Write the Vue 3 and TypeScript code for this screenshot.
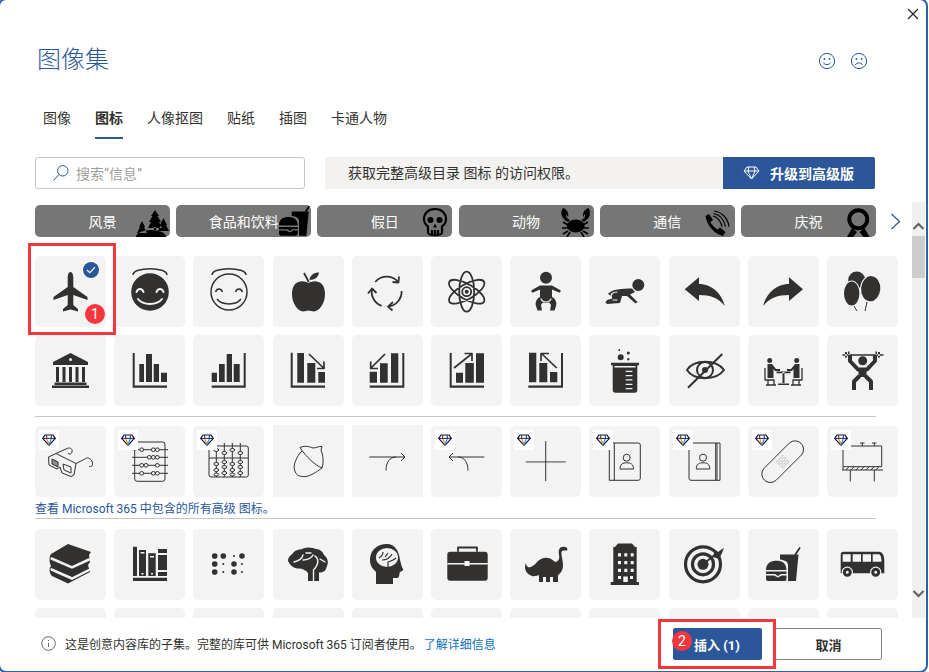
<script setup lang="ts">
interface Shape {
  f?: string
  g?: string
  c?: string
  cs?: string
  l?: string
  f2?: string
  o?: string
  w?: number
  cw?: number
  ow?: number
}

const c = (x: number, y: number, r: number): string =>
  `M${x - r} ${y}a${r} ${r} 0 1 0 ${2 * r} 0a${r} ${r} 0 1 0 ${-2 * r} 0z`
const r = (x: number, y: number, w: number, h: number): string => `M${x} ${y}h${w}v${h}h${-w}z`
const e = (x: number, y: number, rx: number, ry: number, deg = 0): string => {
  const dx = rx * Math.cos((deg * Math.PI) / 180)
  const dy = rx * Math.sin((deg * Math.PI) / 180)
  return `M${x - dx} ${y - dy}A${rx} ${ry} ${deg} 1 0 ${x + dx} ${y + dy}A${rx} ${ry} ${deg} 1 0 ${x - dx} ${y - dy}z`
}
const beads = (list: number[][], rx: number, ry: number): string =>
  list.map(([x, y]) => e(x, y, rx, ry)).join('')

const burger: Shape = {
  f: 'M32 25.5H50.5L48 52H40V36C40 33 37 31 32 30.5zM18 41C18 34 23 31.7 28.5 31.7C34 31.7 38.5 34 38.5 41zM18 42.5H38.5V45H33L30 47L27 45H18zM18 46.5H26L30 48.5L33.5 46.5H38.5V50A2 2 0 0 1 36.5 52H20A2 2 0 0 1 18 50z',
  l: 'M47 26L52 18.5',
  w: 1.8,
}

const halo = 'M19 19C19 10.5 53 10.5 53 19'
const abacusA = [[27.7, 23.7], [39.3, 23.7], [43.3, 23.7], [35.3, 31.3], [39.3, 31.3], [43.3, 31.3], [27.7, 39.3], [32, 39.3], [43.3, 39.3], [27.7, 47.3], [39.3, 47.3], [43.3, 47.3]]
const abacusB = [[23.3, 24], [31.3, 27], [39.3, 24], [47.3, 27], [23.3, 38], [23.3, 44], [31.3, 36], [31.3, 41], [39.3, 38], [39.3, 44], [47.3, 36], [47.3, 41], [31.3, 47], [23.3, 48.5], [39.3, 48.5], [47.3, 47]]
const padDots: string = [-2, -1, 0, 1, 2]
  .flatMap((i) => [-2, -1, 0, 1, 2].map((j) => c(34.7 + (i - j) * 1.5, 35.7 + (i + j) * 1.5, 0.55)))
  .join('')

const row1: Shape[] = [
  { f: 'M35.5 16C33.5 16 32.7 19 32.7 22V31L18.5 41V44L32.7 39V49L28 53V55.5L35.5 53.5L43 55.5V53L38.3 49V39L52.5 44V41L38.3 31V22C38.3 19 37.5 16 35.5 16z' },
  { f: c(36, 36, 18.8), cs: 'M22.5 36C24 32 28 32 29.5 36M42.5 36C44 32 48 32 49.5 36M24 43C29 49.5 43 49.5 48 43', cw: 2, l: halo, w: 1.5 },
  { l: `${c(36, 36, 18)}${halo}M22.5 36C24 32 28 32 29.5 36M42.5 36C44 32 48 32 49.5 36M24 43C29 49.5 43 49.5 48 43`, w: 1.5 },
  { f: 'M35.5 27C30 23.5 19 24 19 38C19 48 25 55 30 55.5C32.5 55.5 33.5 54.5 35.5 54.5C37.5 54.5 38.5 55.5 41 55.5C46 55 52 48 52 38C52 24 41 23.5 35.5 27zM36.5 24C37 19 41 16.5 46 16.5C45.5 21 42 24 36.5 24z', l: 'M35.8 26L31 17', w: 1.8 },
  { l: 'M23.2 26A15 15 0 0 1 46.2 26M47 20.5L46.5 26.5L40.5 26M49.6 35A15 15 0 0 1 36 50.6M41 46L36 50.6L40.5 54.5M29.6 49.8A15 15 0 0 1 19.9 33.1M16 37.5L20 32.5L24.5 37', w: 1.8 },
  { f: c(35.7, 35.7, 2), l: `${e(35.7, 35.7, 20, 7.5, 30)}${e(35.7, 35.7, 20, 7.5, 90)}${e(35.7, 35.7, 20, 7.5, 150)}${c(35.7, 35.7, 4.5)}`, w: 1.8 },
  { f: `${c(36, 21.7, 6)}M30 29.5H42L50 34C51.5 35 50.5 37 49 36.5L42 33.5V41C46 43 47 47 46 50L44.5 54.5H40L41 49C40 47 39 45.5 36 47C33 45.5 32 47 31 49L32 54.5H27.5L26 50C25 47 26 43 30 41V33.5L23 36.5C21.5 37 20.5 35 22 34z`, cs: 'M31 43C33 47 39 47 41 43', cw: 1.2 },
  { f: `${c(49.3, 29, 6)}M19 38C23 33 33 32.5 43 32.5L46 36L41 38.5L48.5 46L46.5 47.5L38 40H33L31 47L18 48L16.5 46.5C18 43 21 43 23 43L22 40z`, cs: 'M22.5 42C21 38 24 36 28 36M24 44H28', cw: 1.2 },
  { f: 'M15.7 33.3L30 21.3V28C43 28 53 38 55.7 50C50 42 41 39 30 39V45z' },
  { f: 'M55 33.3L41 21.3V28C28 28 18 38 15.3 50C21 42 30 39 41 39V45z' },
  { f: e(29.7, 24, 8.5, 8.5), c: `${e(24.7, 37.5, 8.7, 13)}${e(43.7, 32.7, 10.7, 13.7, 5)}`, f2: `${e(24.7, 37.5, 7.7, 12)}${e(43.7, 32.7, 9.6, 12.6, 5)}`, l: 'M27 50L30 55M40 46L38 55', w: 1 },
]

const row2: Shape[] = [
  { f: `M35.5 18L18 27V30H53V27z${[21, 27.5, 34, 40.5, 47].map((x) => r(x, 32, 3, 15)).join('')}${r(19.5, 47.5, 32, 2.5)}${r(17, 50.5, 37, 2.5)}`, c: c(35.5, 24.5, 1.5) },
  { f: `${r(18.7, 18, 2, 32.5)}${r(18.7, 50.5, 34.3, 2.2)}${r(25.3, 29, 4.7, 18)}${r(32, 19, 6, 28)}${r(39.7, 29, 5.3, 18)}${r(47, 37.7, 6, 9.3)}` },
  { f: `${r(50.7, 18, 2, 32.5)}${r(18.7, 50.5, 34, 2.2)}${r(18.7, 37.7, 5.3, 9.3)}${r(26, 29, 5.7, 18)}${r(33.7, 19, 5.3, 28)}${r(40.7, 29, 6, 18)}` },
  { f: `${r(17.7, 17.7, 2, 32.8)}${r(17.7, 50.5, 34.3, 2.2)}${r(24.3, 18, 6.7, 29.7)}${r(34.3, 28, 8, 19.7)}${r(45.3, 37, 6.7, 10.7)}`, l: 'M36 19L50.5 33M51 26.5V33.5H44', w: 1.7 },
  { f: `${r(50.3, 18, 2, 32.5)}${r(17.7, 50.5, 34.6, 2.2)}${r(17.7, 36.7, 7.3, 11)}${r(28, 28.3, 7.7, 19.4)}${r(39, 18.3, 7.3, 29.4)}`, l: 'M33 19L19 33M18.7 26.5V33.5H26', w: 1.7 },
  { f: `${r(18.7, 18, 2, 32.5)}${r(18.7, 50.5, 34.3, 2.2)}${r(25, 37.7, 7, 10)}${r(34.3, 28, 8.5, 19.7)}${r(45, 18.3, 8, 29.4)}`, l: 'M23 33L40.5 19M33.5 18.5H41V26', w: 1.7 },
  { f: `${r(19, 17.7, 7.3, 29.6)}${r(29.3, 28, 8, 19.3)}${r(40, 37, 7.3, 10.3)}${r(51, 18, 2, 32.5)}${r(18.3, 50.5, 34.7, 2.2)}`, l: 'M46.7 33L32 19M31 26V18.5H39', w: 1.7 },
  { f: `${c(31.7, 22.3, 3)}${c(39.3, 18, 1.5)}${c(30.3, 15, 1)}${c(39.3, 24.3, 1.2)}${r(22, 27.7, 28, 2.6)}M23.7 30.3H48.3V55A2.7 2.7 0 0 1 45.6 57.7H26.4A2.7 2.7 0 0 1 23.7 55z`, c: `${r(25.5, 31, 21, 1.4)}${r(36.7, 35.7, 6.7, 1.2)}${r(36.7, 40, 6.7, 1.2)}${r(36.7, 44.3, 6.7, 1.2)}${r(36.7, 48.7, 6.7, 1.2)}${r(36.7, 53, 6.7, 1.2)}` },
  { f: c(36, 35, 3), l: `M18 35C25 24 47 24 55 35C47 46 25 46 18 35z${c(36, 35, 8)}M53.3 19L19 52.7`, w: 2 },
  { f: `${c(21.7, 25.5, 2.5)}${c(48.7, 25.5, 2.5)}M19.5 29H24L28 34H32V36H27L25.5 34V43H19.5zM51.5 29H47L43 34H39V36H44L45.5 34V43H51.5z${r(28.5, 36.5, 14, 1.7)}${r(34.5, 37, 2, 12)}${r(30, 48.5, 11, 1.5)}`, l: 'M17 33V45H26V50M20 45V50M18 50H28M54 33V45H45V50M51 45V50M53 50H43', w: 1.3 },
  {
    f: `${c(35.7, 25.7, 4.5)}${r(15.5, 19.3, 41, 1.5)}${r(18, 17, 2, 5.5)}${r(51, 17, 2, 5.5)}${r(21, 16.5, 1.5, 6.5)}${r(48.5, 16.5, 1.5, 6.5)}${r(31.5, 33, 8, 9)}`,
    l: 'M23 20V26L31 34.5H40L48 26V20M32.5 41L27 46.5V55M38.5 41L44 46.5V55',
    w: 4,
  },
]

const row3: Shape[] = [
  { g: 'M17 33l6 3v5l-6-3z', l: 'M13.5 31L21 27.5L41 37.5L39 49L36 50.5L27 47L25 41L22 43L14 39zM17 33l6 3v5l-6-3zM28 38l8 3v6l-7-3zM41 37.5L50 33C52 31 55 32 57 35C59 39 56 42 54 40M21 27.5L31 23C34 21 38 22 37 26C36 29 33 28 33 27', w: 1 },
  { l: 'M23.2 16H48.5A2.5 2.5 0 0 1 51 18.5V52.8A2.5 2.5 0 0 1 48.5 55.3H23.2A2.5 2.5 0 0 1 20.7 52.8V18.5A2.5 2.5 0 0 1 23.2 16zM18 23.7H54M18 31.3H54M18 39.3H54M18 47.3H54', w: 1, c: beads(abacusA, 2, 1.8), o: beads(abacusA, 2, 1.8), ow: 1 },
  { l: 'M18 20H53.3A2 2 0 0 1 55.3 22V49A2 2 0 0 1 53.3 51H18A2 2 0 0 1 16 49V22A2 2 0 0 1 18 20zM16 32H55.3M23.3 17V51M31.3 17V51M39.3 17V51M47.3 17V51', w: 1, c: beads(abacusB, 2.4, 1.5), o: beads(abacusB, 2.4, 1.5), ow: 1 },
  { l: 'M29 25C24 30 20 38 21.5 44C23 50 28 51 33 50.5C40 49 46 44 49 42M27 21.5C33 19 37 21 40 22C43 22 46 20 49 20.5L48 24C50 29 51 36 49 42C42 39 33 31 27 21.5z', w: 1 },
  { l: 'M17.3 31H53M49 27L53 31L49 35M34 44.5C34 36 38 31 44 31', w: 1 },
  { l: 'M53.3 31H18M22 27L18 31L22 35M37 44.5C37 36 33 31 27 31', w: 1 },
  { g: r(15.7, 35, 40, 1.7), l: 'M35.7 15V55', w: 1 },
  { l: `M20.3 17H49.3A2 2 0 0 1 51.3 19V52.3A2 2 0 0 1 49.3 54.3H20.3zM25.3 17V54.3${c(37.7, 31.7, 3.5)}M31 43C31 38 34 36.8 37.7 36.8C41.5 36.8 44.5 38 44.5 43z`, w: 1 },
  { l: `M22 17H51V54.3H22A2 2 0 0 1 20 52.3V19A2 2 0 0 1 22 17zM46.7 17V54.3M48 17V54.3${c(34, 31.7, 3.5)}M27.3 43C27.3 38 30.3 36.8 34 36.8C37.8 36.8 40.8 38 40.8 43z`, w: 1 },
  { g: padDots, l: 'M16 42.4L41.4 17A8.5 8.5 0 0 1 53.4 29L28 54.4A8.5 8.5 0 0 1 16 42.4z', w: 1 },
  { l: `${r(16, 20, 38.7, 20.7)}M15 44H56M16 40.7V44M23.3 44V55.3M47.3 44V55.3M35.3 17V20M47.3 17V20M33 17H37.5M45 17H49.5M19 44L22 40.7M24 44L27 40.7M29 44L32 40.7M34 44L37 40.7M39 44L42 40.7M44 44L47 40.7M49 44L52 40.7`, w: 1 },
]

const row4: Shape[] = [
  { f: 'M16 25L33 15L56 23L54 26L55 33L53 36L55 43L33 54.5L17 47C14 44 14 39 16 37C14 33 14 28 16 25z', cs: 'M16.5 29.5L37 38.5L54 30.5M16.5 40.5L37 49.5L54 41', cw: 2.5 },
  { f: `${r(19, 48.7, 34, 3.3)}${r(19, 17.7, 4, 29.3)}${r(25, 21, 7, 26)}${r(34.3, 24.3, 7.4, 22.7)}${r(44, 20, 9, 4)}${r(44, 26, 9, 15)}${r(44, 43, 9, 4)}`, c: `${r(26.5, 23, 4, 1.5)}${r(36, 27, 4, 1.5)}${r(27.5, 44, 2, 1.5)}${r(37, 44, 2, 1.5)}` },
  { f: `${c(21.7, 27, 2.8)}${c(30.3, 27, 2.8)}${c(41, 27, 1)}${c(49, 27, 2.8)}${c(21.7, 35, 2.8)}${c(30.3, 35, 1)}${c(41, 35, 2.8)}${c(49, 35, 1)}${c(21.7, 43, 2.8)}${c(30.3, 43, 1)}${c(41, 43, 2.8)}${c(49, 43, 1)}` },
  { f: 'M15 32C15 27 19 26 20 24C23 20 28 21 30 19.5C35 17.5 40 18.5 43 20C47 20 50 23 51 26C55 29 56 34 53.5 38C53 42 50 43.5 47 43.5H46V52H35V44C33 41 29 39.5 26 39.5C22 39.5 18 38 15 32z', cs: 'M21 33C25 32 29 30 30 26M30 31C34 31 39 29 40 26M42 27C46 30 46 35 40.5 41M40.5 52V41M47 30L52 33M33 24L38 24', cw: 1.4 },
  { f: 'M35 15C24 15 18 22 18 31C18 37 21 40 24 43V55H41V49H45C48 49 47 44 48 43C50 42 52 41 51 40C49 37 49 34 48 31C47 22 43 15 35 15z', c: e(35, 28.5, 11, 9.5), l: 'M27 29C30 27 31 25 31 23M30 31C34 31 38 29 40 25M36 38V33C39 32 42 31 44 29M33 28L36 24', w: 1.2 },
  { f: 'M19.3 22.7H53.7A3 3 0 0 1 56.7 25.7V48.7A3 3 0 0 1 53.7 51.7H19.3A3 3 0 0 1 16.3 48.7V25.7A3 3 0 0 1 19.3 22.7z', c: `${r(16.3, 34, 40.4, 1.4)}${r(33.5, 32, 5, 5)}`, l: 'M27 22.7V18.5H46V22.7', w: 1.8 },
  { f: 'M15.5 34C14 40 16 45 22 47C24 47.5 27 47 29 46V53H33V48H36V53H40V48H43V53H48V46C51 44 53 41 53 36C53 31 51 26 51.5 23C52 21 55 21.5 57 21.5C58 20 57 18 55 18C50 17 48 20 49 26C50 30 48 33 45 33C40 28 33 27 27 33C24 37 20 39 18 38C16 37 16 35 15.5 34z' },
  { f: 'M26 18L29 14.5H43L46 18H47.7V53H50V56H21.7V53H24.3V18z', c: `${[29, 35.3, 41.7].flatMap((x) => [24.3, 32, 39.7].map((y) => r(x, y, 3, 3.2))).join('')}${r(34.3, 47.5, 4.5, 5.5)}${r(29, 47, 3, 3)}${r(41, 47, 3, 3)}` },
  { f: c(34, 35.3, 5.5), l: `${c(34, 35.3, 17.5)}${c(34, 35.3, 10.5)}`, w: 3.2, f2: 'M44 28L46 21L49 23L55 18.7L53 24L50 30z', o: 'M34 35.3L47 25', ow: 1.8 },
  burger,
  { f: 'M16.7 22.7H52C55 22.7 57.3 26 57.3 31V44.3H13.7V25.7A3 3 0 0 1 16.7 22.7z', c: `${r(15.7, 25.3, 8, 7.4)}${r(25.7, 25.3, 8.3, 7.4)}${r(35.7, 25.3, 8.3, 7.4)}M45.7 25.3H52C53.5 25.3 54.5 29 54.5 32.7H45.7z${c(20.3, 43.3, 5.7)}${c(48.7, 43.3, 5.7)}`, f2: `${c(20.3, 43.3, 4.5)}${c(20.3, 43.3, 1.5)}${c(48.7, 43.3, 4.5)}${c(48.7, 43.3, 1.5)}` },
]

const blanks: Shape[] = Array.from({ length: 11 }, () => ({}))

const mirrorX = (v: number): number => 35.4 - v
const claw = (m: boolean): string => {
  const x = (v: number) => (m ? mirrorX(v) : v)
  return `M${x(5)} 3C${x(2)} 7 ${x(3)} 14 ${x(10)} 17L${x(12)} 15C${x(8)} 13 ${x(8)} 11 ${x(8.5)} 9L${x(10)} 12C${x(11)} 9 ${x(10)} 5 ${x(5)} 3z`
}

const chips = [
  { label: '风景', w: 36, h: 32, vb: '0 0 36 32', shape: { f: `M21 5L25 11H23.5L27 17H25L28 23H14L17 17H15L18.5 11H17zM29.5 13L33 20H32L35 26H24L27 20H26zM8 16L11 22H10L13 28H3L6 22H5z${e(17, 32, 15, 7)}${r(20, 22, 2, 3)}` } as Shape },
  { label: '食品和饮料', w: 33, h: 32, vb: '17 18.5 36 35', shape: burger },
  { label: '假日', w: 36, h: 32, vb: '0 0 36 32', shape: { f: `${c(14.5, 15, 3)}${c(23.5, 15, 3)}M19 18.5L17 22.5H21z`, l: 'M19 4C12 4 8 8.5 8 14C8 18 10 20 12 21.5V28C14 31 24 31 26 28V21.5C28 20 30 18 30 14C30 8.5 26 4 19 4zM16 25V30M19 25V30M22 25V30', w: 2.2 } as Shape },
  { label: '动物', w: 36, h: 32, vb: '0 0 36 32', shape: { f: `${claw(false)}${claw(true)}${e(17.7, 21, 9, 6.5)}`, l: 'M10 20L5 17M10 23L4 23M10 26L5 29M12 27L9 32M25 20L30 17M25 23L31 23M25 26L30 29M23 27L26 32', w: 1.6 } as Shape },
  { label: '通信', w: 36, h: 32, vb: '0 0 36 32', shape: { f: 'M6.5 11L10 9L14 15L11.5 17C13 20 15.5 23 18.5 24.5L21 22.5L26.5 27L24 31C16 29 8 21 6.5 11z', l: 'M14 11C18 12 22 16 23 21.7M14.5 8.5C20 9.5 25 14 26.5 21.7M15 6C22 6.5 29 13 30 21.7', w: 1.2 } as Shape },
  { label: '庆祝', w: 36, h: 32, vb: '0 0 36 32', shape: { f: 'M12 23L7 32H13L17 27zM24.5 23L29.5 32H23.5L19.5 27z', l: c(18.3, 14.3, 9), w: 4 } as Shape },
]

const sections = [
  { rows: [...row1, ...row2], premium: false },
  { rows: row3, premium: true },
  { rows: [...row4, ...blanks], premium: false },
]

const tabs = ['图像', '图标', '人像抠图', '贴纸', '插图', '卡通人物']
const free = new Set([3, 4])
</script>

<template>
  <div class="app">
    <div class="topbar">
      <svg class="close" width="12" height="12" viewBox="0 0 12 12"><path d="M1 1L11 11M11 1L1 11" /></svg>
    </div>

    <header class="title-row">
      <h1 class="title">图像集</h1>
      <div class="feedback">
        <svg width="18" height="18" viewBox="0 0 18 18">
          <circle cx="9" cy="9" r="7.6" />
          <circle class="dot" cx="6.4" cy="7" r=".9" />
          <circle class="dot" cx="11.6" cy="7" r=".9" />
          <path d="M5.3 10.5C6.5 13.3 11.5 13.3 12.7 10.5" />
        </svg>
        <svg width="18" height="18" viewBox="0 0 18 18">
          <circle cx="9" cy="9" r="7.6" />
          <circle class="dot" cx="6.4" cy="7" r=".9" />
          <circle class="dot" cx="11.6" cy="7" r=".9" />
          <path d="M5.3 13C6.5 10.2 11.5 10.2 12.7 13" />
        </svg>
      </div>
    </header>

    <nav class="tabs">
      <span v-for="(tab, i) in tabs" :key="tab" class="tab" :class="{ active: i === 1 }">{{ tab }}</span>
    </nav>

    <div class="toolbar">
      <div class="search">
        <svg width="18" height="18" viewBox="0 0 18 18"><circle cx="10.8" cy="6.8" r="5.2" /><path d="M7 10.6L1.5 16.5" /></svg>
        <span>搜索“信息”</span>
      </div>
      <div class="banner">获取完整高级目录 图标 的访问权限。</div>
      <button class="upgrade">
        <svg width="17" height="14" viewBox="0 0 17 14"><path d="M4 1H13L16 5L8.5 13L1 5zM1 5H16M6 1L5 5L8.5 13L12 5L11 1" /></svg>
        升级到高级版
      </button>
    </div>

    <div class="body">
      <main class="content">
        <div class="chips">
          <div v-for="chip in chips" :key="chip.label" class="chip">
            <span>{{ chip.label }}</span>
            <svg class="chip-icon" :width="chip.w" :height="chip.h" :viewBox="chip.vb">
              <path v-if="chip.shape.f" class="ink" :d="chip.shape.f" />
              <path v-if="chip.shape.l" class="line" :d="chip.shape.l" :stroke-width="chip.shape.w ?? 1" />
            </svg>
          </div>
          <svg class="next" width="11" height="17" viewBox="0 0 11 17"><path d="M1.5 1L9.5 8.5L1.5 16" /></svg>
        </div>

        <template v-for="(section, s) in sections" :key="s">
          <hr v-if="s > 0" class="rule" :class="{ second: s === 2 }" />
          <div class="grid">
            <div v-for="(icon, i) in section.rows" :key="i" class="cell" :class="{ erased: section.premium && free.has(i) }">
              <svg width="71" height="71" viewBox="0 0 71 71">
                <path v-if="icon.g" class="mid" :d="icon.g" />
                <path v-if="icon.f" class="ink" :d="icon.f" />
                <path v-if="icon.c" class="cut" :d="icon.c" />
                <path v-if="icon.cs" class="cutline" :d="icon.cs" :stroke-width="icon.cw ?? 1" />
                <path v-if="icon.l" class="line" :d="icon.l" :stroke-width="icon.w ?? 1" />
                <path v-if="icon.c && icon.o && !icon.f" class="cut" :d="icon.c" />
                <path v-if="icon.f2" class="ink" :d="icon.f2" />
                <path v-if="icon.o" class="line" :d="icon.o" :stroke-width="icon.ow ?? 1" />
              </svg>
              <span v-if="section.premium && !free.has(i)" class="gem">
                <svg width="14" height="12" viewBox="0 0 14 12">
                  <path class="gem-out" d="M3 1H11L13.3 4.4L7 11.3L.7 4.4z" />
                  <path class="gem-o" d="M4.7 4.6L7 10.8" />
                  <path class="gem-b" d="M9.3 4.6L7 10.8" />
                  <path class="gem-in" d="M.9 4.4H13.1M4.7 1.2L4.7 4.4M9.3 1.2V4.4" />
                </svg>
              </span>
              <template v-if="s === 0 && i === 0">
                <span class="check">
                  <svg width="10" height="8" viewBox="0 0 10 8"><path d="M1 4L3.8 6.6L9 1.2" /></svg>
                </span>
                <span class="marker one">1</span>
                <span class="callout first"></span>
              </template>
            </div>
          </div>
          <a v-if="section.premium" class="more">查看 Microsoft 365 中包含的所有高级 图标。</a>
        </template>
      </main>

      <aside class="scrollbar">
        <svg width="13" height="34" viewBox="0 0 13 34"><path d="M1.5 27L6.5 22L11.5 27" /></svg>
        <div class="thumb"></div>
        <div class="track"></div>
        <svg width="13" height="34" viewBox="0 0 13 34"><path d="M1.5 7L6.5 12L11.5 7" /></svg>
      </aside>
    </div>

    <footer class="footer">
      <svg class="info" width="15" height="15" viewBox="0 0 15 15">
        <circle cx="7.5" cy="7.5" r="6.8" />
        <path d="M7.5 6.6V11M7.5 4V5" />
      </svg>
      <p class="note">这是创意内容库的子集。完整的库可供 Microsoft 365 订阅者使用。<a>了解详细信息</a></p>
      <div class="actions">
        <button class="insert">
          插入 (1)
          <span class="marker two">2</span>
          <span class="callout second"></span>
        </button>
        <button class="cancel">取消</button>
      </div>
    </footer>

    <div class="frame"></div>
  </div>
</template>

<style scoped>
.app {
  --blue: #2b579a;
  --text: #323130;
  --red: #f5363c;
  position: relative;
  width: 929px;
  height: 672px;
  overflow: hidden;
  background: #fff;
  color: var(--text);
  font-family: Roboto, "Noto Sans CJK SC", sans-serif;
  font-size: 14px;
  display: flex;
  flex-direction: column;
}
.frame {
  position: absolute;
  left: -2px;
  top: -2px;
  right: 1px;
  bottom: -1px;
  border: 2px solid #2b62b0;
  border-radius: 8px;
  pointer-events: none;
}
.topbar {
  height: 28px;
  display: flex;
  justify-content: flex-end;
  padding: 8px 10px 0 0;
  box-sizing: border-box;
}
.close path {
  stroke: #222;
  stroke-width: 1.2;
  fill: none;
}
.title-row {
  height: 62px;
  box-sizing: border-box;
  display: flex;
  align-items: center;
  justify-content: space-between;
  padding: 3px 61px 0 37px;
}
.title {
  margin: 0 0 2px;
  font-size: 24px;
  font-weight: 300;
  color: var(--blue);
  line-height: 1;
}
.feedback {
  display: flex;
  gap: 14px;
}
.feedback svg {
  display: block;
}
.feedback circle,
.feedback path {
  fill: none;
  stroke: var(--blue);
  stroke-width: 1;
}
.feedback .dot {
  fill: var(--blue);
  stroke: none;
}
.tabs {
  margin-top: 14px;
  height: 35px;
  padding-left: 43px;
  display: flex;
  gap: 24px;
}
.tab {
  height: 35px;
  line-height: 28px;
  box-sizing: border-box;
}
.tab.active {
  font-weight: 700;
  border-bottom: 2px solid var(--blue);
}
.toolbar {
  margin-top: 18px;
  padding-left: 35px;
  display: flex;
  height: 32px;
}
.search {
  width: 270px;
  box-sizing: border-box;
  border: 1px solid #c8c6c4;
  border-radius: 3px;
  display: flex;
  align-items: center;
  gap: 6px;
  padding-left: 16px;
  color: #a19f9d;
}
.search svg {
  flex: none;
}
.search circle,
.search path {
  fill: none;
  stroke: var(--blue);
  stroke-width: 1;
}
.banner {
  width: 398px;
  margin-left: 20px;
  box-sizing: border-box;
  background: #f3f2f1;
  padding-left: 23px;
  line-height: 32px;
}
.upgrade {
  width: 152px;
  border: 0;
  border-radius: 0 2px 2px 0;
  background: var(--blue);
  color: #fff;
  font: inherit;
  font-weight: 700;
  display: flex;
  align-items: center;
  gap: 10px;
  padding: 0 0 0 20px;
}
.upgrade path {
  fill: none;
  stroke: #fff;
  stroke-width: 1;
}
.body {
  margin-top: 13px;
  height: 416px;
  display: flex;
  overflow: hidden;
}
.content {
  width: 912px;
  flex: none;
  box-sizing: border-box;
  padding: 3px 0 0 35px;
}
.chips {
  display: flex;
  align-items: center;
  gap: 6.2px;
  height: 32px;
}
.chip {
  position: relative;
  width: 135px;
  height: 32px;
  flex: none;
  overflow: hidden;
  border-radius: 5px;
  background: #767676;
  color: #fff;
  text-align: center;
  line-height: 34px;
}
.chip span {
  position: relative;
  z-index: 1;
}
.chip-icon {
  position: absolute;
  right: 0;
  top: 0;
  --bg: #767676;
  --ink: #000;
}
.next {
  margin-left: 8px;
}
.next path {
  fill: none;
  stroke: var(--blue);
  stroke-width: 1.2;
}
.grid {
  --bg: #f3f3f3;
  --ink: #323130;
  margin-top: 19px;
  display: grid;
  grid-template-columns: repeat(11, 71px);
  column-gap: 8.2px;
  row-gap: 8px;
}
.rule + .grid {
  margin-top: 9px;
}
.rule.second + .grid {
  margin-top: 10px;
}
.cell {
  position: relative;
  width: 71px;
  height: 71px;
  border-radius: 5px;
  background: var(--bg);
}
.cell.erased {
  border-radius: 0;
  box-shadow: 0 -1px 0 var(--bg);
}
.cell > svg {
  display: block;
}
.ink {
  fill: var(--ink);
  fill-rule: evenodd;
}
.mid {
  fill: #8f8e8d;
}
.cut {
  fill: var(--bg);
  stroke: none;
}
.cutline {
  fill: none;
  stroke: var(--bg);
  stroke-linecap: round;
}
.line {
  fill: none;
  stroke: var(--ink);
  stroke-linejoin: round;
}
.gem {
  position: absolute;
  left: 4px;
  top: 4px;
  width: 20px;
  height: 20px;
  background: #fff;
  display: flex;
  align-items: center;
  justify-content: center;
}
.gem path {
  fill: none;
  stroke-width: 1.2;
}
.gem .gem-out,
.gem .gem-in {
  stroke: #141440;
}
.gem .gem-in {
  stroke-width: 0.9;
}
.gem .gem-o {
  stroke: #f08a1d;
}
.gem .gem-b {
  stroke: #2c8fe0;
}
.check {
  position: absolute;
  left: 48px;
  top: 6px;
  width: 16px;
  height: 16px;
  box-sizing: border-box;
  border-radius: 50%;
  background: var(--blue);
  display: flex;
  align-items: center;
  justify-content: center;
  box-shadow: 0 0 0 1px #fff;
}
.check path {
  fill: none;
  stroke: #fff;
  stroke-width: 1.2;
}
.marker {
  position: absolute;
  width: 20px;
  height: 20px;
  border-radius: 50%;
  background: var(--red);
  color: #fff;
  font-size: 14px;
  font-weight: 400;
  line-height: 20px;
  text-align: center;
}
.marker.one {
  left: 50px;
  top: 48px;
}
.marker.two {
  left: -1px;
  top: 3px;
}
.callout {
  position: absolute;
  box-sizing: border-box;
  border: 3px solid var(--red);
  pointer-events: none;
  z-index: 2;
}
.callout.first {
  left: -7px;
  top: -13px;
  width: 88px;
  height: 92px;
}
.callout.second {
  left: -15px;
  top: -9px;
  width: 118px;
  height: 50px;
}
.more {
  display: block;
  height: 21px;
  font-size: 12px;
  line-height: 24px;
  color: var(--blue);
}
.rule {
  margin: 10px 0 0;
  width: 841px;
  height: 1px;
  border: 0;
  background: #c8c6c4;
}
.more + .rule {
  margin-top: 0;
}
.scrollbar {
  width: 13px;
  flex: none;
  background: #f0f0f0;
  display: flex;
  flex-direction: column;
}
.scrollbar svg {
  flex: none;
}
.scrollbar path {
  fill: none;
  stroke: #606060;
  stroke-width: 2;
}
.thumb {
  height: 42px;
  flex: none;
  background: #cdcdcd;
}
.track {
  flex: 1;
}
.footer {
  height: 52px;
  display: flex;
  align-items: center;
  padding: 0 47px 0 41px;
}
.info {
  flex: none;
  margin-bottom: 2px;
}
.info circle {
  fill: none;
  stroke: #6a6a6a;
  stroke-width: 1;
}
.info path {
  stroke: #6a6a6a;
  stroke-width: 1;
}
.note {
  margin: 0 0 2px 9px;
  font-size: 12px;
}
.note a {
  margin-left: 2px;
  color: #106ebe;
}
.actions {
  margin-left: auto;
  display: flex;
  gap: 13px;
}
.insert,
.cancel {
  position: relative;
  height: 32px;
  border-radius: 2px;
  font: inherit;
  font-size: 13px;
  font-weight: 700;
  padding: 0;
}
.insert {
  width: 89px;
  border: 0;
  background: var(--blue);
  color: #fff;
  padding-left: 21px;
  text-align: left;
}
.cancel {
  width: 107px;
  border: 1px solid #8a8886;
  background: #fff;
  color: var(--text);
}
</style>

<style>
html,
body {
  margin: 0;
  background: #fff;
}
</style>
